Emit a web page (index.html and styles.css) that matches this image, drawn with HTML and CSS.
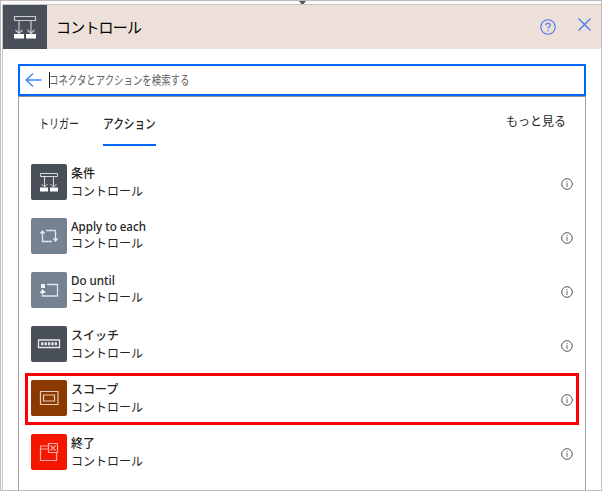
FILE: index.html
```html
<!DOCTYPE html>
<html lang="ja">
<head>
<meta charset="utf-8">
<title>コントロール</title>
<link rel="stylesheet" href="styles.css">
</head>
<body>
<svg class="defs" width="0" height="0">
  <symbol id="condition" viewBox="0 0 36 36">
    <path d="M9.500 9.500h17v3h-17zM13.500 12.500v10M22.500 12.500v10M10.500 20l3 3 3-3M19.500 20l3 3 3-3" fill="none" stroke="#d8dade"/>
    <path d="M9 23.500h8v4H9zM19 23.500h8v4h-8z" fill="#fff"/>
  </symbol>
  <symbol id="info" viewBox="0 0 12 12">
    <circle cx="6" cy="6" r="5.300" fill="none" stroke="#555" stroke-width="1"/>
    <path d="M6 5v4" stroke="#a47b58" stroke-width="1.200"/><path d="M6 3v1.200" stroke="#a47b58" stroke-width="1.200"/>
  </symbol>
</svg>
<div class="window">
  <div class="notch"><svg width="7" height="4"><path d="M0 0h7L4.500 3h-2z" fill="#555"/></svg></div>
  <section class="card">
    <header class="header">
      <div class="header-icon"><svg width="44" height="44" viewBox="0 0 44 44" fill="none" stroke="#c9ccd0" stroke-width="1.200"><path d="M11.500 11.500h21v4h-21zM16 15.500v12M28 15.500v12M12.500 25l3.500 3.500 3.500-3.500M24.500 25l3.500 3.500 3.500-3.500"/><path d="M11 29h10v4.500H11zM23 29h10v4.500H23z" fill="#fff" stroke="none"/></svg></div>
      <h1>コントロール</h1>
      <svg class="help" width="16" height="16" viewBox="0 0 16 16" fill="none" stroke="#4a76f5"><circle cx="8" cy="8" r="7.200" stroke-width="1.100"/><path d="M5.900 6.300c0-2.700 4.300-2.700 4.300-.2C10.200 7.700 8 7.700 8 9.600M8 11v1.300" stroke-width="1.200"/></svg>
      <svg class="close" width="13" height="13" fill="none" stroke="#3f70f4" stroke-width="1.100"><path d="M.5.5l12 12M12.500.5l-12 12"/></svg>
    </header>
    <main class="content">
      <div class="search">
        <svg width="17" height="14" fill="none" stroke="#397ffb" stroke-width="1.300"><path d="M16.500 7H1M8 .5L1.200 7 8 13.500"/></svg>
        <div class="field"><span>コネクタとアクションを検索する</span></div>
      </div>
      <div class="panel">
        <nav class="tabs">
          <div class="tab first"><span>トリガー</span></div>
          <div class="tab active"><span>アクション</span></div>
          <div class="more"><span>もっと見る</span></div>
        </nav>
        <div class="list">
          <div class="row">
            <div class="icon dark"><svg width="36" height="36"><use href="#condition"/></svg></div>
            <div class="label"><b>条件</b><span>コントロール</span></div>
            <svg class="info" width="12" height="12"><use href="#info"/></svg>
          </div>
          <div class="row">
            <div class="icon slate"><svg width="36" height="36" fill="none" stroke="#e1e5e9" stroke-width="1.300"><path d="M21 23.500H11.500v-9M15 12.500h9.500v9"/><path d="M8.500 15.500l3-3.500 3 3.500zM21.500 20.500l3 3.500 3-3.500z" fill="#e8ebee" stroke="none"/></svg></div>
            <div class="label near"><b class="latin">Apply to each</b><span>コントロール</span></div>
            <svg class="info" width="12" height="12"><use href="#info"/></svg>
          </div>
          <div class="row">
            <div class="icon slate"><svg width="36" height="36" fill="none" stroke="#e1e5e9" stroke-width="1.300"><path d="M16 12.500h10.500v11.500H11.500v-4"/><path d="M8.500 21l3.200-4 3.200 4zM10 12h4v4h-4z" fill="#f2f4f5" stroke="none"/></svg></div>
            <div class="label near"><b class="latin">Do until</b><span>コントロール</span></div>
            <svg class="info" width="12" height="12"><use href="#info"/></svg>
          </div>
          <div class="row">
            <div class="icon dark"><svg width="36" height="36" fill="none" stroke="#e5e7e9"><path d="M7.500 14h21v7.500h-21z" stroke-width="1.300"/><path d="M10 17.800h16" stroke-width="3" stroke-dasharray="2.400 1"/></svg></div>
            <div class="label"><b>スイッチ</b><span>コントロール</span></div>
            <svg class="info" width="12" height="12"><use href="#info"/></svg>
          </div>
          <div class="row selected">
            <div class="icon brown"><svg width="36" height="36" fill="none" stroke="#e5cebc" stroke-width="1.200"><path d="M9.500 11.500h17.500v13H9.500zM12.500 15h11v6h-11z"/></svg></div>
            <div class="label"><b>スコープ</b><span>コントロール</span></div>
            <svg class="info" width="12" height="12"><use href="#info"/></svg>
          </div>
          <div class="row">
            <div class="icon red"><svg width="36" height="36" fill="none" stroke="#ffb0a6" stroke-width="1.200"><path d="M17 12H9.500v14.500h16V19M9.500 15H17M17.500 9.500h9v9h-9zM19.500 11.500l5 5M24.500 11.500l-5 5"/></svg></div>
            <div class="label"><b>終了</b><span>コントロール</span></div>
            <svg class="info" width="12" height="12"><use href="#info"/></svg>
          </div>
        </div>
      </div>
    </main>
  </section>
</div>
</body>
</html>
```
FILE: styles.css
```css
* { box-sizing: border-box; }
body { margin: 0; background: #fff; color: #252423; font-family: "Noto Sans CJK JP", sans-serif; overflow: hidden; }
svg { display: block; flex: none; }
.defs { position: absolute; }
span, b { display: block; white-space: nowrap; transform-origin: left center; }
.window { width: 602px; height: 491px; border: 1px solid #bdbdbd; }
.notch { height: 3px; padding-left: 298px; background: #fafafa; }
.card { height: 486px; margin-left: 1px; border-top: 1px solid #c8c8c8; border-left: 1px solid #c8c8c8; }
.header { height: 44px; display: flex; background: #ede0d9; }
.header-icon { width: 44px; height: 44px; background: #484f58; }
h1 { flex: 1; margin: 0 0 0 9px; font-size: 15px; line-height: 43px; font-weight: 400; letter-spacing: -.8px; color: #000; }
.help { margin: 14px 22px 0 0; }
.close { margin: 13px 10px 0 0; }
.content { padding: 15px 15px 0; }
.search { height: 32px; display: flex; align-items: center; border: 2px solid #0066ff; padding-left: 5px; }
.field { height: 16px; margin-left: 7px; border-left: 1px solid #222; font-size: 12px; line-height: 16px; color: #605e5c; }
.field span { margin-left: -1px; transform: scaleX(.785); }
.panel { height: 394px; border: 1px solid #a0a0a0; border-top-color: #909090; border-bottom: 0; }
.tabs { height: 49px; display: flex; padding-left: 20px; font-size: 13px; }
.tab { height: 49px; line-height: 52px; }
.first { width: 39px; margin-right: 25px; }
.first span { transform: scaleX(.77); }
.active { width: 53px; border-bottom: 2px solid #0066ff; font-weight: 500; }
.active span { transform: scaleX(.82); }
.more { width: 60px; margin-left: auto; margin-right: 19px; line-height: 48px; font-size: 12px; }
.list { padding-top: 9px; }
.row { height: 54px; margin: 0 6px; padding: 9px 6px; display: flex; }
.selected { height: 52px; margin: 2px 6px 0; padding: 4px 3px; border: 3px solid #f00; }
.icon { width: 36px; height: 36px; border-radius: 2px; flex: none; }
.dark { background: #484f58; }
.slate { background: #748291; }
.brown { background: #8c3900; }
.red { background: #f41700; }
.label { flex: 1; margin-left: 4px; font-size: 12px; line-height: 18px; }
.label b { font-weight: 500; height: 18px; line-height: 17px; }
.near b { height: 16px; }
.label .latin { font-family: "Noto Sans", sans-serif; font-weight: 500; transform: scaleX(.965); width: max-content; }
.info { margin: 14px 0 0; }
```
